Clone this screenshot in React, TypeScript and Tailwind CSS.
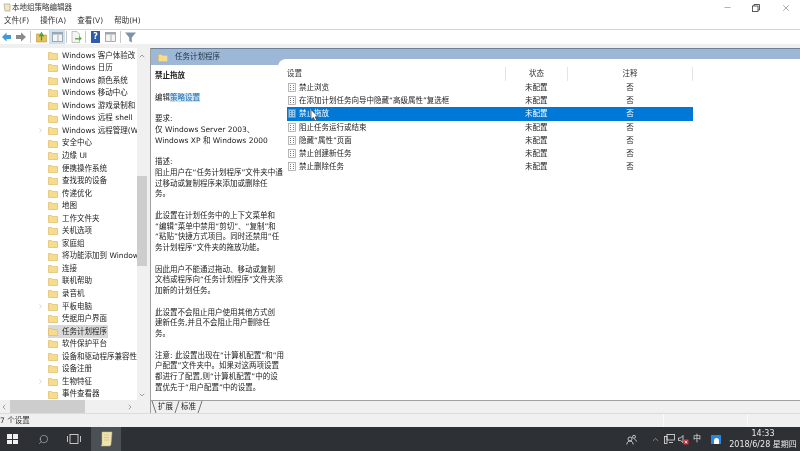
import React from 'react';
import { Minus, X, Search, ChevronUp, ChevronDown, ChevronLeft, ChevronRight } from 'lucide-react';

const FONT = '[font-family:"DejaVu_Sans","Noto_Sans_CJK_SC",sans-serif]';

const TREE_ITEMS = [
  { label: 'Windows 客户体验改' },
  { label: 'Windows 日历' },
  { label: 'Windows 颜色系统' },
  { label: 'Windows 移动中心' },
  { label: 'Windows 游戏录制和' },
  { label: 'Windows 远程 shell' },
  { label: 'Windows 远程管理(W', expand: true },
  { label: '安全中心' },
  { label: '边缘 UI' },
  { label: '便携操作系统' },
  { label: '查找我的设备' },
  { label: '传递优化' },
  { label: '地图' },
  { label: '工作文件夹' },
  { label: '关机选项' },
  { label: '家庭组' },
  { label: '将功能添加到 Window' },
  { label: '连接' },
  { label: '联机帮助' },
  { label: '录音机' },
  { label: '平板电脑', expand: true },
  { label: '凭据用户界面' },
  { label: '任务计划程序', selected: true },
  { label: '软件保护平台' },
  { label: '设备和驱动程序兼容性' },
  { label: '设备注册' },
  { label: '生物特征', expand: true },
  { label: '事件查看器' },
];

const DESCRIPTION = [
  '',
  '要求:',
  '仅 Windows Server 2003、',
  'Windows XP 和 Windows 2000',
  '',
  '描述:',
  '阻止用户在“任务计划程序”文件夹中通',
  '过移动或复制程序来添加或删除任',
  '务。',
  '',
  '此设置在计划任务中的上下文菜单和',
  '“编辑”菜单中禁用“剪切”、“复制”和',
  '“粘贴”快捷方式项目。同时还禁用“任',
  '务计划程序”文件夹的拖放功能。',
  '',
  '因此用户不能通过拖动、移动或复制',
  '文档或程序向“任务计划程序”文件夹添',
  '加新的计划任务。',
  '',
  '此设置不会阻止用户使用其他方式创',
  '建新任务,并且不会阻止用户删除任',
  '务。',
  '',
  '注意: 此设置出现在“计算机配置”和“用',
  '户配置”文件夹中。如果对这两项设置',
  '都进行了配置,则“计算机配置”中的设',
  '置优先于“用户配置”中的设置。',
];

const POLICIES = [
  '禁止浏览',
  '在添加计划任务向导中隐藏“高级属性”复选框',
  '禁止拖放',
  '阻止任务运行或结束',
  '隐藏“属性”页面',
  '禁止创建新任务',
  '禁止删除任务',
];

function FolderIcon() {
  return (
    <svg width="10" height="9" viewBox="0 0 10 9" className="shrink-0">
      <path d="M0.5 1.5 H3.5 L4.5 2.5 H9.5 V8.5 H0.5 Z" fill="#f7dc8e" stroke="#dcbc68" strokeWidth="0.7" />
    </svg>
  );
}

function PolicyIcon({ selected }: { selected?: boolean }) {
  return (
    <svg width="8" height="9" viewBox="0 0 8 9" className="shrink-0">
      <rect x="0.5" y="0.5" width="7" height="8" fill={selected ? '#8fc4e8' : '#fafafa'} stroke={selected ? '#5a96c0' : '#9a9a9a'} strokeWidth="0.7" />
      <path d="M2 2.5h1M2 4.5h1M2 6.5h1M5 2.5h1M5 4.5h1M5 6.5h1" stroke={selected ? '#24598a' : '#555'} strokeWidth="0.8" />
    </svg>
  );
}

function TabSlash({ flip }: { flip?: boolean }) {
  return (
    <svg width="6" height="13" viewBox="0 0 6 13" className="shrink-0">
      <path d={flip ? 'M1 0 L5 12' : 'M5 0 L1 12'} stroke="#555" strokeWidth="0.8" fill="none" />
    </svg>
  );
}

function Toolbar() {
  return (
    <div className="flex h-[14px] items-center pl-[1px]">
      <svg width="26" height="12" viewBox="0 0 26 12">
        <path d="M1 6 L5.5 1.5 V4 H10 V8 H5.5 V10.5 Z" fill="#3f9bd6" />
        <path d="M25 6 L20 1.5 V4 H15 V8 H20 V10.5 Z" fill="#8a8a8a" />
      </svg>
      <div className="ml-[3px] h-[12px] w-[1px] bg-[#c8c8c8]" />
      <svg width="11" height="12" viewBox="0 0 11 12" className="ml-[5px]">
        <path d="M0.5 3 H4 L5 4 H10.5 V11 H0.5 Z" fill="#e4c25c" stroke="#b8962e" strokeWidth="0.6" />
        <path d="M5.5 9.5 V4 M3.5 5.5 L5.5 2 L7.5 5.5" stroke="#3e9a3e" strokeWidth="1.3" fill="none" />
      </svg>
      <div className="ml-[2px] flex h-[14px] w-[16px] items-center justify-center bg-[#cfe0f0]">
        <svg width="11" height="10" viewBox="0 0 11 10">
          <rect x="0.5" y="0.5" width="10" height="9" fill="#f4f4f4" stroke="#7f8f9a" strokeWidth="0.7" />
          <rect x="0.5" y="0.5" width="10" height="2" fill="#8faabb" />
          <path d="M6 3v6" stroke="#7f8f9a" strokeWidth="0.7" />
        </svg>
      </div>
      <div className="ml-[1px] h-[12px] w-[1px] bg-[#c8c8c8]" />
      <svg width="11" height="12" viewBox="0 0 11 12" className="ml-[4px]">
        <path d="M1 0.5 H6 L8.5 3 V11.5 H1 Z" fill="#f5f5f0" stroke="#a0a0a0" strokeWidth="0.6" />
        <path d="M4 7 H8 V5 L11 7.5 L8 10 V8.5 H4 Z" fill="#62b04a" />
      </svg>
      <div className="ml-[3px] h-[12px] w-[1px] bg-[#c8c8c8]" />
      <div className="ml-[5px] flex h-[12px] w-[9px] items-center justify-center bg-[#2e5ca8] text-[8px] leading-none font-bold text-white">?</div>
      <svg width="11" height="10" viewBox="0 0 11 10" className="ml-[5px]">
        <rect x="0.5" y="0.5" width="10" height="9" fill="#f4f4f4" stroke="#8a8a8a" strokeWidth="0.7" />
        <rect x="0.5" y="0.5" width="10" height="2" fill="#a0a8ae" />
        <path d="M6 3v6" stroke="#8a8a8a" strokeWidth="0.7" />
      </svg>
      <div className="ml-[4px] h-[12px] w-[1px] bg-[#c8c8c8]" />
      <svg width="11" height="11" viewBox="0 0 11 11" className="ml-[4px]">
        <path d="M0 0.5 H11 L6.8 5.5 V10.5 L4.2 9 V5.5 Z" fill="#7d94a8" />
      </svg>
    </div>
  );
}

function Tree() {
  return (
    <div className="flex w-[147px] shrink-0 flex-col">
      <div className="flex min-h-0 flex-1">
        <div className="w-[137px] overflow-hidden pt-[1px]">
          {TREE_ITEMS.map((item) => (
            <div key={item.label} className="flex h-[12.55px] items-center whitespace-nowrap">
              <div className="flex w-[48px] shrink-0 justify-end pr-[4px]">
                {item.expand && <ChevronRight size={7} strokeWidth={1.2} className="text-[#888]" />}
              </div>
              <div className={`flex h-[12.55px] items-center gap-[4px] ${item.selected ? 'bg-[#d9d9d9] pr-[1px]' : ''}`}>
                <FolderIcon />
                <span>{item.label}</span>
              </div>
            </div>
          ))}
        </div>
        <div className="flex w-[10px] flex-col items-center bg-[#f0f0f0] pt-[4px]">
          <ChevronUp size={8} strokeWidth={1.6} className="text-[#555]" />
          <div className="mt-[116px] h-[90px] w-full bg-[#cdcdcd]" />
          <div className="flex-1" />
          <ChevronDown size={8} strokeWidth={1.6} className="mb-[1px] text-[#555]" />
        </div>
      </div>
      <div className="flex h-[13px] items-center bg-[#f0f0f0]">
        <ChevronLeft size={8} strokeWidth={1.6} className="text-[#555]" />
        <div className="ml-[2px] h-full w-[75px] bg-[#cdcdcd]" />
        <div className="flex-1" />
        <ChevronRight size={8} strokeWidth={1.6} className="mr-[13px] text-[#555]" />
      </div>
    </div>
  );
}

function DetailsPanel() {
  return (
    <div className="flex min-w-0 flex-1 flex-col">
      <div className="flex min-h-0 flex-1 border-t border-t-[#6f8196] bg-[#9db8d6]">
        <div className="relative z-10 flex w-[127px] shrink-0 flex-col">
          <div className="flex h-[16px] items-center gap-[7px] pl-[7px]">
            <FolderIcon />
            <span className="text-[#1f2d3d]">任务计划程序</span>
          </div>
          <div className="flex-1 bg-white pl-[4px] pt-[6px] leading-[10.76px] whitespace-nowrap">
            <div className="h-[10.76px] font-bold">禁止拖放</div>
            <div className="h-[10.76px]" />
            <div className="h-[10.76px]">
              编辑<span className="bg-[#cfe3f5] text-[#1a6fb5]">策略设置</span>
            </div>
            {DESCRIPTION.map((line, i) => (
              <div key={i} className="h-[10.76px]">{line}</div>
            ))}
          </div>
        </div>
        <div className="flex min-w-0 flex-1 flex-col pt-[10px]">
          <div className="relative flex-1 rounded-tl-lg bg-white pl-[9px] pt-[8px]">
            <div className="flex h-[14px] items-center">
              <div className="w-[218px] text-[#333]">设置</div>
              <div className="flex h-full w-[62px] items-center justify-center border-l border-[#e4e4e4] text-[#333]">状态</div>
              <div className="flex h-full w-[126px] items-center justify-center border-x border-[#e4e4e4] text-[#333]">注释</div>
            </div>
            {POLICIES.map((name, i) => (
              <div
                key={name}
                className={`flex h-[13.2px] w-[406px] items-center whitespace-nowrap ${i === 2 ? 'bg-[#0078d7] text-white' : ''}`}
              >
                <div className="flex w-[218px] items-center gap-[3px] pl-[1px]">
                  <PolicyIcon selected={i === 2} />
                  <span>{name}</span>
                </div>
                <div className="w-[62px] pl-[20px]">未配置</div>
                <div className="w-[126px] text-center">否</div>
              </div>
            ))}
            {/* mouse cursor over the selected row */}
            <svg width="9" height="13" viewBox="0 0 9 13" className="absolute left-[32px] top-[50px]">
              <path d="M1 0.5 V10.5 L3.4 8.4 L5 12 L6.8 11.2 L5.2 7.8 H8.2 Z" fill="#fff" stroke="#333" strokeWidth="0.7" />
            </svg>
          </div>
        </div>
      </div>
      <div className="flex h-[13px] items-start border-t border-[#a0a0a0] bg-[#f0f0f0]">
        <TabSlash flip />
        <span className="px-[1px] leading-[12px]">扩展</span>
        <TabSlash />
        <span className="px-[1px] leading-[12px]">标准</span>
        <TabSlash />
      </div>
    </div>
  );
}

function Tray() {
  return (
    <div className="flex items-center text-[#e8e8e8]">
      <svg width="11" height="11" viewBox="0 0 11 11" className="mr-[14px]" fill="none" stroke="#e4e4e4" strokeWidth="0.8">
        <circle cx="4" cy="5" r="2" />
        <path d="M0.8 10.5 C1 8 2.5 7 4 7 C5.5 7 7 8 7.2 10.5" />
        <circle cx="8" cy="2.8" r="1.5" />
        <path d="M8.4 5.2 C9.5 5.4 10.2 6.2 10.4 7.5" />
      </svg>
      <ChevronUp size={9} strokeWidth={1.2} className="mr-[4px]" />
      <svg width="11" height="10" viewBox="0 0 11 10" className="mr-[3px]" fill="none" stroke="#e4e4e4" strokeWidth="0.8">
        <rect x="3" y="0.5" width="7.5" height="5.5" />
        <rect x="0.5" y="2.5" width="2.5" height="7" />
        <path d="M5 8.5h4" />
      </svg>
      <svg width="11" height="11" viewBox="0 0 11 11" className="mr-[4px]">
        <path d="M0.5 4 H2.5 L5 1.5 V8.5 L2.5 6.5 H0.5 Z" fill="none" stroke="#e4e4e4" strokeWidth="0.8" />
        <rect x="5.5" y="5.5" width="5" height="5" fill="#d8343c" />
        <path d="M6.8 6.8 L9.2 9.2 M9.2 6.8 L6.8 9.2" stroke="#fff" strokeWidth="0.8" />
      </svg>
      <span className="mr-[10px] text-[8px]">中</span>
      <div className="mr-[5px] flex h-[9px] w-[10px] items-end justify-center bg-[#2b86e0]">
        <div className="h-[6px] w-[5px] rounded-t-full bg-white" />
      </div>
      <div className="flex w-[74px] flex-col items-center text-[8px] leading-[11px]">
        <span>14:33</span>
        <span className="whitespace-nowrap">2018/6/28 星期四</span>
      </div>
    </div>
  );
}

export default function App() {
  return (
    <div className={`flex h-[451px] w-[800px] flex-col overflow-hidden bg-white text-[7.5px] text-[#222] blur-[0.3px] ${FONT}`}>
      {/* title bar */}
      <div className="flex h-[15px] items-center pl-[3px]">
        <svg width="8" height="9" viewBox="0 0 8 9" className="shrink-0">
          <path d="M1 1 H7 V8 H2 Z" fill="#efe7c8" stroke="#b0a478" strokeWidth="0.7" />
        </svg>
        <span className="ml-[1px] text-[#333]">本地组策略编辑器</span>
        <div className="flex-1" />
        <Minus size={9} strokeWidth={1} className="mr-[20px] text-[#333]" />
        <svg width="8" height="8" viewBox="0 0 8 8" className="mr-[21px]" fill="none" stroke="#333" strokeWidth="0.8">
          <rect x="0.5" y="2" width="5.5" height="5.5" />
          <path d="M2 2 V0.5 H7.5 V6 H6" />
        </svg>
        <X size={10} strokeWidth={1} className="mr-[9px] text-[#333]" />
      </div>
      {/* menu */}
      <div className="flex h-[15px] items-center gap-[11px] border-b border-[#d4d4d4] pb-[2px] pl-[4px] text-[#333]">
        <span>文件(F)</span>
        <span>操作(A)</span>
        <span>查看(V)</span>
        <span>帮助(H)</span>
      </div>
      <Toolbar />
      <div className="h-[4px] bg-[#f0f0f0]" />
      {/* main area */}
      <div className="flex min-h-0 flex-1">
        <Tree />
        <div className="w-[3px] shrink-0 bg-[#f0f0f0]" />
        <div className="w-[1px] shrink-0 bg-[#a0a0a0]" />
        <DetailsPanel />
      </div>
      {/* status bar */}
      <div className="flex h-[14px] items-center border-t border-[#dcdcdc] bg-[#f0f0f0] text-[#333]">
        <span className="w-[663px]">7 个设置</span>
        <div className="h-full w-[84px] border-l border-[#fafafa]" />
        <div className="h-full flex-1 border-l border-[#fafafa]" />
      </div>
      {/* taskbar */}
      <div className="flex h-[24px] items-center bg-[#2d3135]">
        <div className="ml-[7px] grid h-[10px] w-[11px] grid-cols-2 gap-[1px]">
          <div className="bg-[#f0f0f0]" />
          <div className="bg-[#f0f0f0]" />
          <div className="bg-[#f0f0f0]" />
          <div className="bg-[#f0f0f0]" />
        </div>
        <Search size={11} strokeWidth={1} className="ml-[20px] -scale-x-100 text-[#e8e8e8]" />
        <svg width="14" height="10" viewBox="0 0 14 10" className="ml-[18px]" fill="none" stroke="#e8e8e8" strokeWidth="0.8">
          <rect x="3" y="0.5" width="8" height="9" />
          <path d="M0.5 2 V8 M13.5 2 V8" />
        </svg>
        <div className="ml-[10px] flex h-full w-[30px] items-center justify-center bg-[#4b5054]">
          <svg width="13" height="16" viewBox="0 0 13 16">
            <path d="M2 1 H12 L11 13 C11 14.5 10 15 9 15 H1 C2 14 2 13 2 12 Z" fill="#efe3b0" stroke="#c8b878" strokeWidth="0.5" />
            <path d="M4 4h5M4 6.5h5M4 9h5" stroke="#c8b878" strokeWidth="0.6" />
          </svg>
        </div>
        <div className="flex-1" />
        <Tray />
      </div>
    </div>
  );
}
